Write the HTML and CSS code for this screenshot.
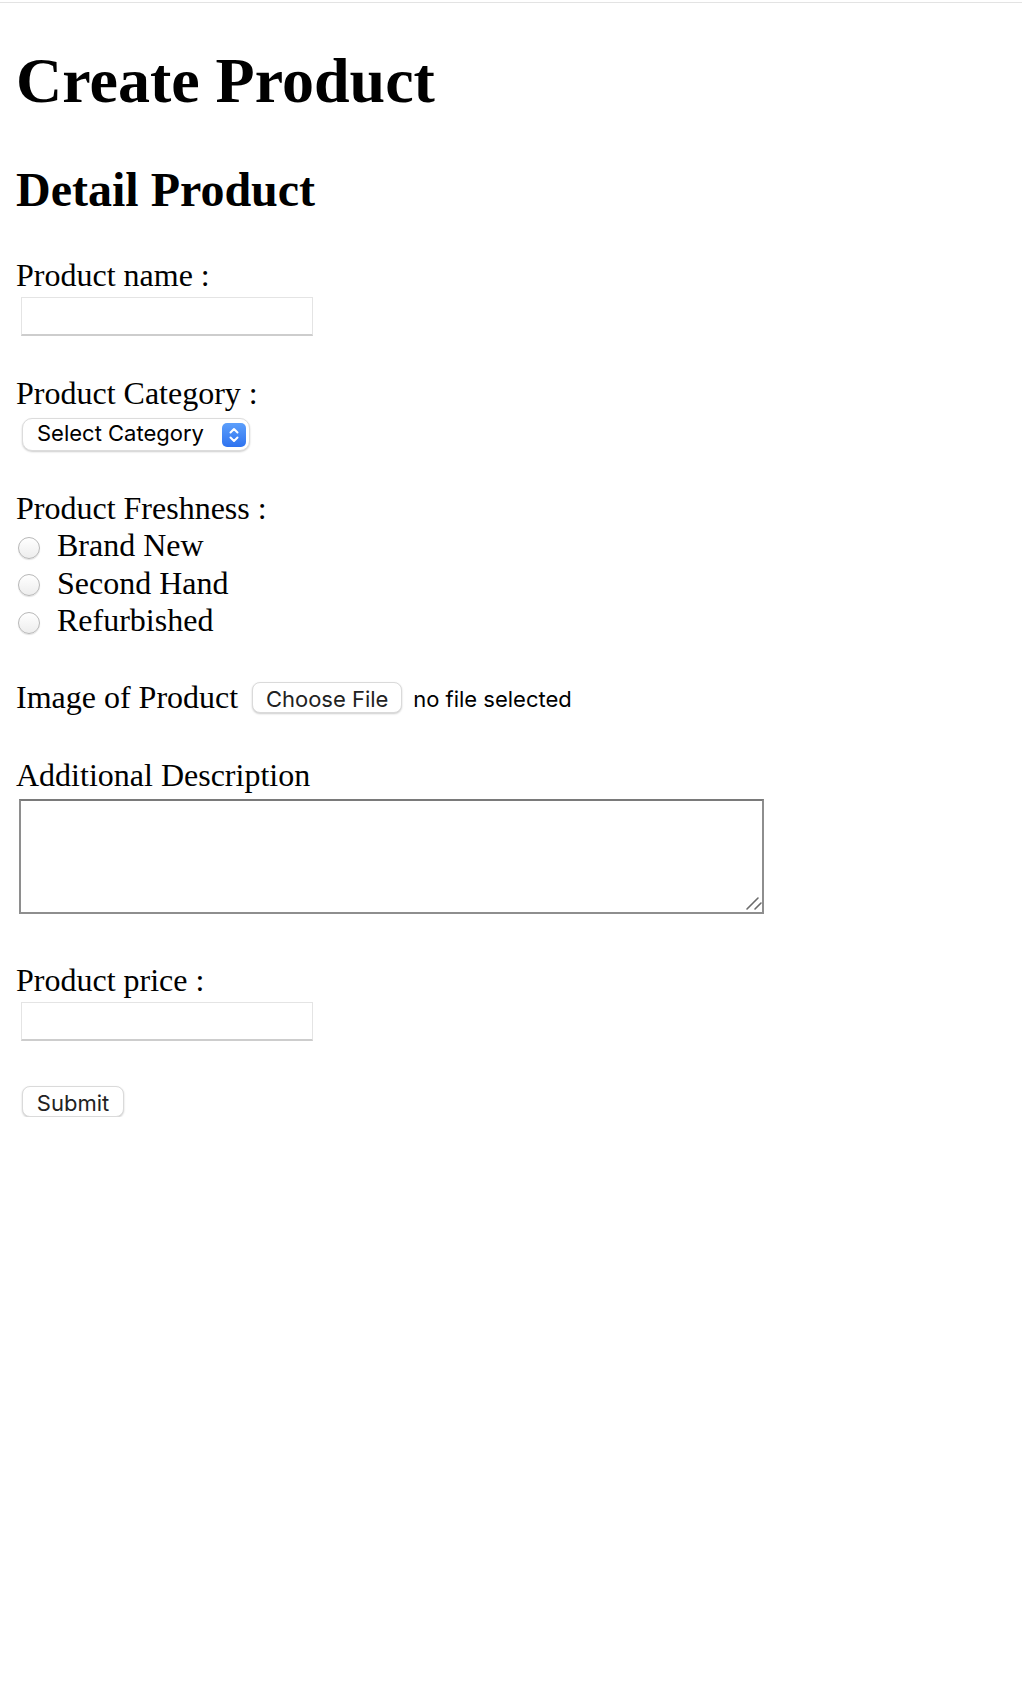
FILE: index.html
```html
<!DOCTYPE html>
<html>
<head>
	<title>Create Product</title>
	<link rel="stylesheet" href="styles.css">
</head>
<body>
	<h1>Create Product</h1>
	<form class="product-form" onsubmit="return false">
		<h2>Detail Product</h2>

		<label class="field-label" for="productName">Product name :</label>
		<input type="text" id="productName" class="text-input">

		<label class="field-label gap" for="productCategory">Product Category :</label>
		<div class="select-wrap">
			<select id="productCategory" class="select-box">
				<option>Select Category</option>
				<option>Electronics</option>
				<option>Fashion</option>
				<option>Home</option>
			</select>
			<svg class="stepper" width="24" height="24" viewBox="0 0 24 24">
				<defs>
					<linearGradient id="stepFill" x1="0" y1="0" x2="0" y2="1">
						<stop offset="0" stop-color="#5c9ffb"/>
						<stop offset="1" stop-color="#2f73ef"/>
					</linearGradient>
				</defs>
				<rect x="0" y="0" width="24" height="24" rx="5" fill="url(#stepFill)"/>
				<path d="M8.5 9.5 L12 6 L15.5 9.5" fill="none" stroke="white" stroke-width="2" stroke-linecap="round" stroke-linejoin="round"/>
				<path d="M8.5 14.5 L12 18 L15.5 14.5" fill="none" stroke="white" stroke-width="2" stroke-linecap="round" stroke-linejoin="round"/>
			</svg>
		</div>

		<span class="field-label gap">Product Freshness :</span>
		<label class="option"><input type="radio" name="freshness" value="new"> Brand New</label>
		<label class="option"><input type="radio" name="freshness" value="second"> Second Hand</label>
		<label class="option"><input type="radio" name="freshness" value="refurbished"> Refurbished</label>

		<div class="file-row">
			<span class="row-label">Image of Product</span>
			<label class="file-button">Choose File<input type="file" id="productImage"></label>
			<span class="file-name">no file selected</span>
		</div>

		<label class="field-label desc-gap" for="description">Additional Description</label>
		<div class="textarea-wrap">
			<textarea id="description" class="description"></textarea>
			<!-- resize grip, drawn like the Safari one -->
			<svg class="grip" width="20" height="20" viewBox="0 0 20 20">
				<path d="M14 4 L3 15 M17 9 L11 15" stroke="#6b6b6b" stroke-width="1.6" stroke-linecap="round"/>
			</svg>
		</div>

		<label class="field-label price-gap" for="productPrice">Product price :</label>
		<input type="text" id="productPrice" class="text-input">

		<button type="submit" class="submit-button">Submit</button>
	</form>
</body>
</html>
```

FILE: styles.css
```css
body {
	margin: 2px 0 0;
	padding: 0 16px;
	border-top: 1px solid #e3e3e3;
	background: white;
	color: black;
	font-family: "Liberation Serif", "Times New Roman", serif;
	font-size: 32px;
}
h1 {
	font-size: 64px;
	line-height: 74px;
	margin: 41px 0 0;
}
h2 {
	font-size: 48px;
	line-height: 55px;
	margin: 44px 0 0;
}
.product-form {
	margin: 0;
}
.field-label {
	display: block;
	line-height: 37px;
	margin-top: 40.4px;
}
.field-label.gap {
	margin-top: 39px;
}
.desc-gap {
	margin-top: 40.5px;
}
.price-gap {
	margin-top: 48px;
}
.text-input {
	display: block;
	box-sizing: border-box;
	width: 292px;
	height: 39px;
	margin: 3px 0 0 5px;
	padding: 0 6px;
	border: 1px solid #e4e4e4;
	border-bottom: 2px solid #cdcdcd;
	border-radius: 0;
	background: white;
	font-family: "Inter", "Liberation Sans", sans-serif;
	font-size: 22px;
	-webkit-appearance: none;
	appearance: none;
	outline: none;
}
.select-wrap {
	position: relative;
	width: 228px;
	margin: 6px 0 0 6px;
}
.select-box {
	display: block;
	box-sizing: border-box;
	width: 100%;
	padding: 2px 0 4px 14px;
	border: 1px solid #dcdcdc;
	border-radius: 10px;
	background: white;
	box-shadow: 0 1px 2px rgba(0, 0, 0, 0.2);
	color: black;
	font-family: "Inter", "Liberation Sans", sans-serif;
	font-size: 22px;
	line-height: 25px;
	-webkit-appearance: none;
	appearance: none;
	outline: none;
}
.stepper {
	position: absolute;
	top: 5px;
	right: 4px;
	pointer-events: none;
}
.option {
	display: flex;
	align-items: center;
	height: 37.4px;
	line-height: 37.4px;
}
.option input {
	box-sizing: border-box;
	width: 22px;
	height: 22px;
	margin: 3.6px 17px 0 2px;
	border: 1px solid #b8b8b8;
	border-radius: 50%;
	background: linear-gradient(180deg, #ffffff, #ededed);
	box-shadow: 0 1px 1px rgba(0, 0, 0, 0.12);
	-webkit-appearance: none;
	appearance: none;
}
.file-row {
	display: flex;
	align-items: center;
	height: 37px;
	line-height: 37px;
	margin-top: 39.5px;
}
.file-button, .submit-button {
	box-sizing: border-box;
	display: flex;
	align-items: center;
	justify-content: center;
	height: 31px;
	padding: 3px 0 0;
	border: 1px solid #dadada;
	border-radius: 8px;
	background: white;
	box-shadow: 0 1px 2px rgba(0, 0, 0, 0.2);
	color: #222;
	font-family: "Inter", "Liberation Sans", sans-serif;
	font-size: 22px;
	line-height: 1;
}
.file-button {
	width: 150px;
	margin-left: 14px;
}
.file-button input {
	display: none;
}
.file-name {
	margin-left: 11px;
	padding-top: 3px;
	font-family: "Inter", "Liberation Sans", sans-serif;
	font-size: 22px;
}
.textarea-wrap {
	position: relative;
	width: 745px;
	height: 115px;
	margin: 5.3px 0 0 3px;
}
.description {
	display: block;
	box-sizing: border-box;
	width: 100%;
	height: 100%;
	margin: 0;
	border: 2px solid #8e8e8e;
	border-top-color: #7a7a7a;
	background: white;
	outline: none;
	resize: none;
}
.grip {
	position: absolute;
	right: 0;
	bottom: 0;
	pointer-events: none;
}
.submit-button {
	width: 102px;
	margin: 45px 0 0 6px;
}
```
